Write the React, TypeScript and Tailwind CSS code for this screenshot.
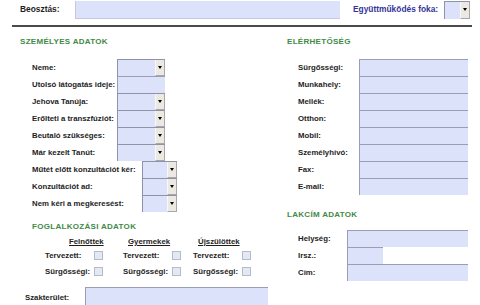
import React, { FC } from "react";

const font = { fontFamily: '"Liberation Sans", Arial, sans-serif' };

const Field: FC<{ w: string }> = ({ w }) => (
  <div className={`${w} h-[17px] bg-[#dde2fb] border-t border-l border-[#9a9db4]`} />
);

const Select: FC<{ w: string; h?: string }> = ({ w, h = "h-[17px]" }) => (
  <div className={`${w} ${h} flex bg-[#dde2fb] border-t border-l border-[#8f92a8]`}>
    <div className="flex-1" />
    <div className="w-[10px] flex items-center justify-center bg-[#ece9e2] border-l border-[#f8f8f8] border-r border-b border-r-[#a8a8a8] border-b-[#a8a8a8]">
      <div className="w-0 h-0 border-l-[2px] border-r-[2px] border-t-[3px] border-l-transparent border-r-transparent border-t-black" />
    </div>
  </div>
);

const Check = () => (
  <div className="w-[9px] h-[9px] bg-[#e4e8f2] border border-[#b4bccb]" />
);

const Label: FC<{ children: React.ReactNode }> = ({ children }) => (
  <div className="text-[7.8px] leading-[9px] font-bold text-[#1e1e1e] whitespace-nowrap">{children}</div>
);

const Heading: FC<{ children: React.ReactNode; className?: string }> = ({ children, className = "" }) => (
  <div className={`text-[8px] leading-[9px] font-bold tracking-[0.3px] text-[#3f8a47] whitespace-nowrap ${className}`}>
    {children}
  </div>
);

export default function App() {
  const personal1 = ["Neme:", "Utolsó látogatás ideje:", "Jehova Tanúja:", "Erőlteti a transzfúziót:", "Beutaló szükséges:", "Már kezelt Tanút:"];
  const personal2 = ["Műtét előtt konzultációt kér:", "Konzultációt ad:", "Nem kéri a megkeresést:"];
  const contact = ["Sürgősségi:", "Munkahely:", "Mellék:", "Otthon:", "Mobil:", "Személyhívó:", "Fax:", "E-mail:"];

  return (
    <div style={font} className="w-[480px] h-[305px] overflow-hidden bg-white">
      {/* felső sor */}
      <div className="flex items-center h-[19px]">
        <div className="w-[75px] pl-[20px] text-[8.4px] font-bold text-[#1e1e1e]">Beosztás:</div>
        <div className="w-[265px] h-[18px] bg-[#dde2fb] border-l border-b border-[#c4c8e0]" />
        <div className="ml-[13px] w-[91px] text-[8.4px] font-bold text-[#34349a] whitespace-nowrap">Együttműködés foka:</div>
        <Select w="w-[26px]" h="h-[18px]" />
      </div>
      <div className="mt-[6px] ml-[12px] w-[460px] h-[2px] bg-[#4a4a4a]" />

      <div className="flex">
        {/* bal oszlop */}
        <div className="w-[287px]">
          <Heading className="pt-[10px] pl-[20px]">SZEMÉLYES ADATOK</Heading>
          <div className="mt-[13px] pl-[32px] grid grid-cols-[85px_48px]">
            {personal1.map((l, i) => (
              <React.Fragment key={l}>
                <div className="h-[17px] flex items-center"><Label>{l}</Label></div>
                {i === 1 ? <Field w="w-[48px]" /> : <Select w="w-[48px]" />}
              </React.Fragment>
            ))}
          </div>
          <div className="pl-[32px] grid grid-cols-[110px_35px]">
            {personal2.map((l) => (
              <React.Fragment key={l}>
                <div className="h-[17px] flex items-center"><Label>{l}</Label></div>
                <Select w="w-[35px]" />
              </React.Fragment>
            ))}
          </div>

          <Heading className="pt-[10px] pl-[32px]">FOGLALKOZÁSI ADATOK</Heading>
          <div className="mt-[6px] pl-[45px] grid grid-cols-[78px_70px_70px]">
            <div className="pl-[24px] text-[7.8px] leading-[9px] font-bold text-[#1e1e1e] underline underline-offset-1">Felnőttek</div>
            <div className="pl-[5px] text-[7.8px] leading-[9px] font-bold text-[#1e1e1e] underline underline-offset-1">Gyermekek</div>
            <div className="pl-[5px] text-[7.8px] leading-[9px] font-bold text-[#1e1e1e] underline underline-offset-1">Újszülöttek</div>
          </div>
          <div className="mt-[5px] pl-[45px] grid grid-cols-[78px_70px_70px] gap-y-[7px]">
            {["Tervezett:", "Sürgősségi:"].map((l) =>
              [0, 1, 2].map((c) => (
                <div key={l + c} className="flex items-center">
                  <div className="w-[49px]"><Label>{l}</Label></div>
                  <Check />
                </div>
              ))
            )}
          </div>
          <div className="mt-[11px] flex items-start">
            <div className="w-[85px] pl-[25px] pt-[6px]"><Label>Szakterület:</Label></div>
            <div className="w-[183px] h-[20px] bg-[#dde2fb] border-t border-l border-[#9a9db4]" />
          </div>
        </div>

        {/* jobb oszlop */}
        <div className="flex-1">
          <Heading className="pt-[10px]">ELÉRHETŐSÉG</Heading>
          <div className="mt-[13px] pl-[11px] grid grid-cols-[61px_109px]">
            {contact.map((l) => (
              <React.Fragment key={l}>
                <div className="h-[17px] flex items-center"><Label>{l}</Label></div>
                <Field w="w-[109px]" />
              </React.Fragment>
            ))}
          </div>
          <Heading className="mt-[15px]">LAKCÍM ADATOK</Heading>
          <div className="mt-[11px] pl-[11px] grid grid-cols-[49px_121px]">
            <div className="h-[17px] flex items-center"><Label>Helység:</Label></div>
            <Field w="w-[121px]" />
            <div className="h-[17px] flex items-center"><Label>Irsz.:</Label></div>
            <Field w="w-[36px]" />
            <div className="h-[17px] flex items-center"><Label>Cím:</Label></div>
            <Field w="w-[121px]" />
          </div>
        </div>
      </div>
    </div>
  );
}
